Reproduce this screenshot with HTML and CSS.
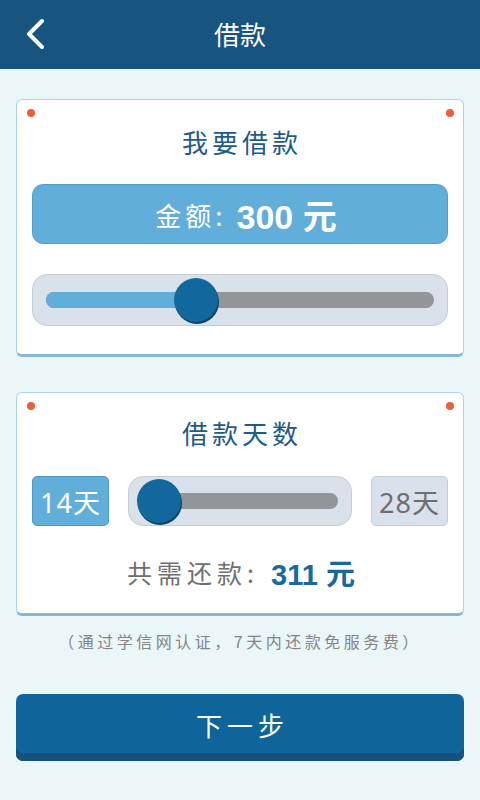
FILE: index.html
```html
<!DOCTYPE html>
<html lang="zh-CN">
<head>
<meta charset="utf-8">
<title>借款</title>
<link rel="stylesheet" href="styles.css">
</head>
<body>
<header class="topbar">
  <div class="back">
    <svg width="24" height="34" viewBox="0 0 24 34"><polyline points="17,3 4,16 17,29" fill="none" stroke="#fff" stroke-width="4" stroke-linecap="round" stroke-linejoin="round"/></svg>
  </div>
  <div class="title">借款</div>
  <div></div>
</header>
<main class="main">
  <section class="card">
    <span class="dot dot-l"></span><span class="dot dot-r"></span>
    <h2 class="card-title">我要借款</h2>
    <div class="amount"><span class="amount-label">金额:</span><span class="amount-value">300 元</span></div>
    <div class="slider slider-wide">
      <div class="track">
        <div class="fill" style="width:150px"></div>
        <div class="thumb" style="left:128px"></div>
      </div>
    </div>
  </section>
  <section class="card card2">
    <span class="dot dot-l"></span><span class="dot dot-r"></span>
    <h2 class="card-title">借款天数</h2>
    <div class="days">
      <div class="day day-on">14天</div>
      <div class="slider slider-days">
        <div class="track">
          <div class="fill" style="width:0"></div>
          <div class="thumb" style="left:-5px"></div>
        </div>
      </div>
      <div class="day day-off">28天</div>
    </div>
    <div class="total"><span class="total-label">共需还款:</span><span class="total-value">311 元</span></div>
  </section>
  <p class="note">（通过学信网认证，7天内还款免服务费）</p>
  <button class="next">下一步</button>
</main>
</body>
</html>
```
FILE: styles.css
```css
* { box-sizing: border-box; }
html, body { margin: 0; padding: 0; }
body {
  width: 480px;
  min-height: 800px;
  background: #ebf6f9;
  font-family: "Noto Sans CJK SC", "Noto Sans", sans-serif;
}
.topbar {
  height: 69px;
  background: #175480;
  display: grid;
  grid-template-columns: 80px 1fr 80px;
  align-items: center;
}
.back { padding-left: 25px; display: flex; align-items: center; height: 34px; }
.back svg { display: block; }
.title {
  text-align: center;
  color: #fff;
  font-size: 26px;
  line-height: 30px;
  padding-bottom: 1px;
}
.main { padding: 30px 16px 0; }
.card {
  position: relative;
  background: #fff;
  border: 1px solid #a9d4ee;
  border-bottom: 3px solid #86b7db;
  border-radius: 6px;
  padding: 30px 15px 28px;
}
.card2 { margin-top: 35px; padding-top: 28px; }
.dot {
  position: absolute;
  top: 9px;
  width: 8px;
  height: 8px;
  border-radius: 50%;
  background: #ea5f3e;
}
.dot-l { left: 10px; }
.dot-r { right: 9px; }
.card-title {
  margin: 0;
  text-align: center;
  font-weight: normal;
  color: #1e5b88;
  font-size: 26px;
  line-height: 24px;
  letter-spacing: 4px;
  padding-left: 4px;
}
.amount {
  margin-top: 30px;
  height: 60px;
  background: #60aed9;
  border: 1px solid #4f9dcc;
  border-radius: 11px;
  display: flex;
  align-items: center;
  justify-content: center;
  padding-left: 12px;
  color: #fff;
}
.amount-label { font-size: 26px; letter-spacing: 4px; margin-right: 10px; }
.amount-value {
  font-family: "Liberation Sans", "Noto Sans CJK SC", sans-serif;
  font-weight: bold;
  font-size: 34px;
}
.slider {
  height: 52px;
  background: #d9e1ea;
  border: 1px solid #c5ced8;
  border-radius: 15px;
  display: flex;
  align-items: center;
  padding: 0 13px;
}
.slider-wide { margin-top: 30px; }
.track {
  position: relative;
  flex: 1;
  height: 16px;
  border-radius: 8px;
  background: #929699;
}
.fill {
  height: 100%;
  border-radius: 8px 0 0 8px;
  background: #60aed9;
}
.thumb {
  position: absolute;
  top: -14px;
  width: 44px;
  height: 44px;
  border-radius: 50%;
  background: #12679c;
  box-shadow: 1px 2px 0 #0b4266;
}
.days {
  margin-top: 31px;
  display: flex;
  gap: 19px;
  height: 50px;
}
.days .slider { flex: 1; height: 50px; padding: 0 13px; }
.day {
  width: 77px;
  height: 50px;
  border-radius: 5px;
  display: flex;
  align-items: center;
  justify-content: center;
  font-family: "Noto Sans", "Noto Sans CJK SC", sans-serif;
  font-size: 27px;
  letter-spacing: 1px;
}
.day-on { background: #60aed9; border: 1px solid #4b9bcb; color: #fff; }
.day-off { background: #d9e1ea; border: 1px solid #c5cfd9; color: #6c6f72; }
.total {
  margin-top: 33px;
  height: 26px;
  display: flex;
  align-items: center;
  justify-content: center;
  padding-left: 2px;
}
.total-label { color: #6f6f6f; font-size: 25px; letter-spacing: 5px; margin-right: 12px; }
.total-value {
  font-family: "Liberation Sans", "Noto Sans CJK SC", sans-serif;
  font-weight: bold;
  font-size: 29px;
  color: #1a68a0;
}
.note {
  margin: 16px 0 0;
  text-align: center;
  color: #858585;
  font-size: 16px;
  line-height: 18px;
  letter-spacing: 3.5px;
}
.next {
  display: block;
  width: 100%;
  margin-top: 44px;
  height: 67px;
  border: none;
  border-radius: 7px;
  background: #0f6599;
  box-shadow: inset 0 -8px 0 #17527c;
  color: #fff;
  font-family: "Noto Sans CJK SC", sans-serif;
  font-size: 26px;
  letter-spacing: 5px;
  padding: 0 0 6px 5px;
}
```
